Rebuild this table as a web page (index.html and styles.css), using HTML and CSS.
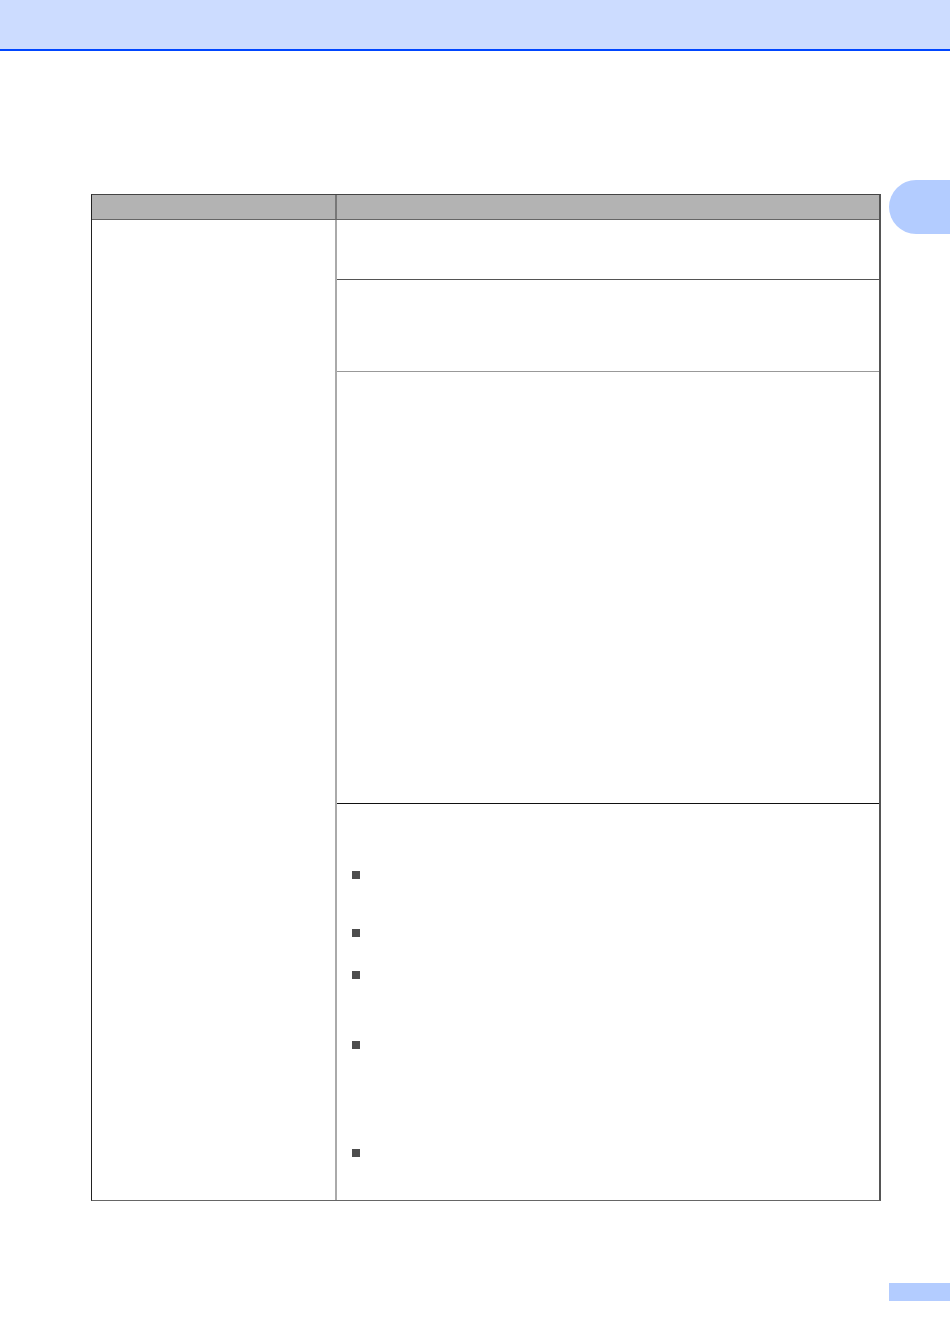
FILE: index.html
```html
<!DOCTYPE html>
<html>
<head>
<meta charset="utf-8">
<link rel="stylesheet" href="styles.css">
</head>
<body>
<header class="topband"></header>
<main class="main">
  <div class="table">
    <div class="head">
      <div class="hcell hleft"></div>
      <div class="hcell hright"></div>
    </div>
    <div class="body">
      <div class="bleft"></div>
      <div class="bright">
        <div class="cell r1"></div>
        <div class="cell r2"></div>
        <div class="cell r3"></div>
        <div class="cell r4">
          <ul class="bullets">
            <li class="b b1"></li>
            <li class="b b2"></li>
            <li class="b b3"></li>
            <li class="b b4"></li>
            <li class="b b5"></li>
          </ul>
        </div>
      </div>
    </div>
  </div>
  <div class="tab"></div>
</main>
<footer class="footer"><div class="pagebox"></div></footer>
</body>
</html>
```
FILE: styles.css
```css
* { box-sizing: border-box; }
html, body { margin: 0; padding: 0; }
body {
  width: 950px;
  height: 1344px;
  background: #fff;
  font-family: "Liberation Sans", Arial, sans-serif;
  overflow: hidden;
}
.topband {
  height: 51px;
  background: #ccdcff;
  border-bottom: 2px solid #0046ff;
}
.main {
  display: flex;
  align-items: flex-start;
  padding-top: 129px;
  padding-left: 91px;
  gap: 8px;
}
.table {
  width: 790px;
  flex-shrink: 0;
  margin-top: 14px;
  border-left: 1px solid #222;
  border-top: 1px solid #444;
  border-right: 2px solid #555;
  border-bottom: 1px solid #666;
}
.head {
  display: flex;
  height: 25px;
  background: #b3b3b3;
  border-bottom: 1px solid #666;
}
.hleft {
  width: 245px;
  border-right: 2px solid #777;
}
.hright { flex: 1; }
.body { display: flex; }
.bleft {
  width: 245px;
  border-right: 2px solid #aaa;
}
.bright {
  flex: 1;
  display: flex;
  flex-direction: column;
}
.r1 { height: 60px; border-bottom: 1px solid #555; }
.r2 { height: 92px; border-bottom: 1px solid #999; }
.r3 { height: 432px; border-bottom: 1px solid #111; }
.r4 { height: 396px; padding: 67px 0 0 15px; }
.bullets {
  list-style: none;
  margin: 0;
  padding: 0;
}
.b {
  width: 8px;
  height: 8px;
  background: #4d4d4d;
}
.b2 { margin-top: 50px; }
.b3 { margin-top: 34px; }
.b4 { margin-top: 62px; }
.b5 { margin-top: 100px; }
.tab {
  width: 61px;
  height: 54px;
  flex-shrink: 0;
  background: #b3ccff;
  border-radius: 27px 0 0 27px;
}
.footer {
  padding-top: 82px;
  padding-left: 889px;
}
.pagebox {
  width: 61px;
  height: 18px;
  background: #b3ccff;
}
```
